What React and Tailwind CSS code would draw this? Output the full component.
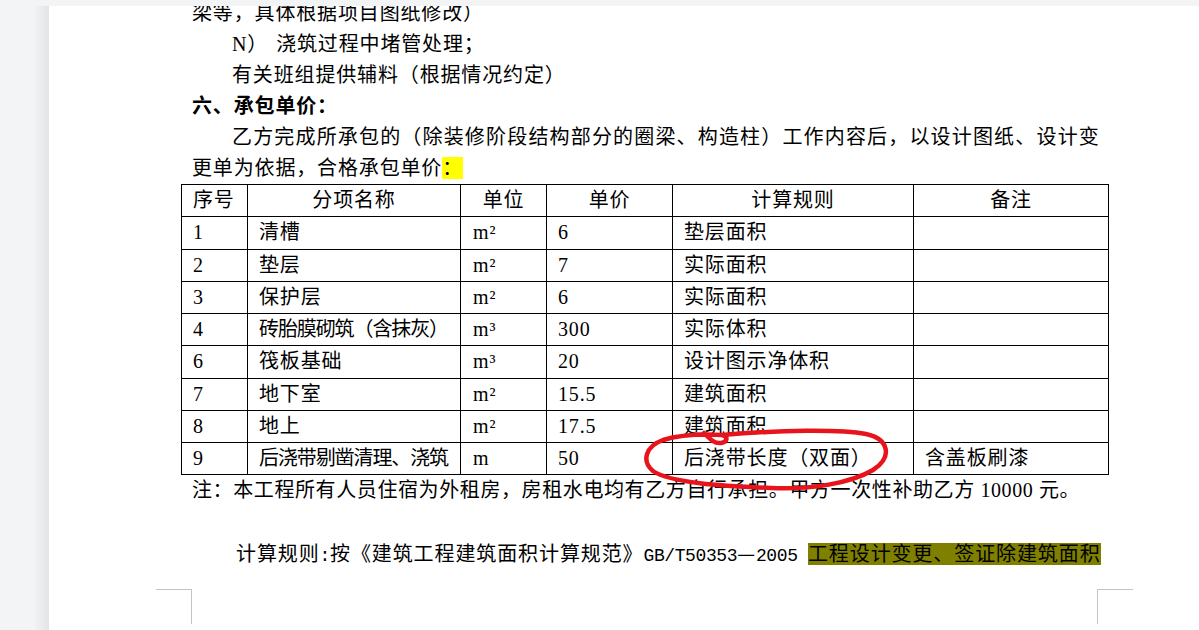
import React from 'react';

const rows = [
  ['1', '清槽', 'm²', '6', '垫层面积', ''],
  ['2', '垫层', 'm²', '7', '实际面积', ''],
  ['3', '保护层', 'm²', '6', '实际面积', ''],
  ['4', '砖胎膜砌筑（含抹灰）', 'm³', '300', '实际体积', ''],
  ['6', '筏板基础', 'm³', '20', '设计图示净体积', ''],
  ['7', '地下室', 'm²', '15.5', '建筑面积', ''],
  ['8', '地上', 'm²', '17.5', '建筑面积', ''],
  ['9', '后浇带剔凿清理、浇筑', 'm', '50', '后浇带长度（双面）', '含盖板刷漆'],
];

// long names are squeezed a little so they stay on one line, as in Word
const tight = (s) => s.length >= 10;

function PriceTable() {
  return (
    <table className="ml-[-11px] w-[927px] table-fixed border-collapse">
      <colgroup>
        <col className="w-[66px]" />
        <col className="w-[213px]" />
        <col className="w-[86px]" />
        <col className="w-[126px]" />
        <col className="w-[241px]" />
        <col className="w-[195px]" />
      </colgroup>
      <thead>
        <tr className="h-[32.25px]">
          <th className="border border-black px-[11px] py-0 text-left font-normal">序号</th>
          <th className="border border-black px-[11px] py-0 text-center font-normal">分项名称</th>
          <th className="border border-black px-[11px] py-0 text-center font-normal">单位</th>
          <th className="border border-black px-[11px] py-0 text-center font-normal">单价</th>
          <th className="border border-black px-[11px] py-0 text-center font-normal">计算规则</th>
          <th className="border border-black px-[11px] py-0 text-center font-normal">备注</th>
        </tr>
      </thead>
      <tbody>
        {rows.map((r) => (
          <tr key={r[0]} className="h-[32.25px]">
            <td className="border border-black px-[11px] py-0">{r[0]}</td>
            <td className={'whitespace-nowrap border border-black px-[11px] py-0 ' + (tight(r[1]) ? 'tracking-[-1.1px]' : '')}>{r[1]}</td>
            <td className="border border-black px-[12px] py-0">{r[2]}</td>
            <td className="border border-black px-[11px] py-0">{r[3]}</td>
            <td className="whitespace-nowrap border border-black px-[11px] py-0">{r[4]}</td>
            <td className="border border-black px-[11px] py-0">{r[5]}</td>
          </tr>
        ))}
      </tbody>
    </table>
  );
}

export default function App() {
  return (
    <div className="relative flex h-[630px] w-[1199px] overflow-hidden bg-white text-black">
      {/* grey desk to the left of the page */}
      <div className="flex w-[49px] shrink-0">
        <div className="w-[33px] bg-[#f3f4f5]" />
        <div className="w-[16px] bg-gradient-to-r from-[#f3f4f5] to-[#e3e4e6]" />
      </div>

      {/* page */}
      <div className="flex-1">
        <div className="mt-[-2px] pl-[143px] font-['Liberation_Serif','Noto_Sans_CJK_SC',serif] text-[20px] leading-[31px] tracking-[0.85px]">
          <div>梁等，具体根据项目图纸修改）</div>
          <div className="pl-[40px]">
            N）<span className="ml-[8px]">浇筑过程中堵管处理；</span>
          </div>
          <div className="pl-[40px]">有关班组提供辅料（根据情况约定）</div>
          <div className="font-bold">六、承包单价：</div>
          <div className="whitespace-nowrap pl-[40px] tracking-[1.17px]">
            乙方完成所承包的（除装修阶段结构部分的圈梁、构造柱）工作内容后，以设计图纸、设计变
          </div>
          <div>
            更单为依据，合格承包单价<span className="bg-[#ffff00]">：</span>
          </div>

          <PriceTable />

          <div className="whitespace-nowrap tracking-[0.6px]">
            注：本工程所有人员住宿为外租房，房租水电均有乙方自行承担。甲方一次性补助乙方 10000 元。
          </div>
          <div className="h-[31px]" />
          <div className="whitespace-nowrap pl-[44px] tracking-[0.9px]">
            计算规则<span className="font-['Liberation_Mono',monospace] text-[18px] tracking-[-0.4px]">:</span>按《建筑工程建筑面积计算规范》
            <span className="font-['Liberation_Mono',monospace] text-[18px] tracking-[-0.4px]">GB/T50353</span>
            <span className="font-['Noto_Sans_CJK_SC',sans-serif]">—</span>
            <span className="font-['Liberation_Mono',monospace] text-[18px] tracking-[-0.4px]">2005 </span>
            <span className="bg-[#808000]">工程设计变更、签证除建筑面积</span>
          </div>
        </div>

        {/* page corner marks */}
        <div className="ml-[107px] mt-[17px] flex w-[977px] justify-between">
          <div className="h-[35px] w-[36px] border-r border-t border-[#c3c3c3]" />
          <div className="h-[35px] w-[36px] border-l border-t border-[#c3c3c3]" />
        </div>
      </div>

      {/* window chrome strip along the top */}
      <div className="absolute left-0 right-0 top-0 h-[6px] bg-[#f3f4f5]" />

      {/* hand-drawn red ring */}
      <svg className="pointer-events-none absolute left-0 top-0" width="1199" height="630" viewBox="0 0 1199 630">
        <path
          d="M704 433 C709 438 714 444 721 443 C727 442 729 437 722 435 C780 430 840 429 866 434 C889 439 893 457 873 470 C851 483 811 490 771 488 C721 486 671 483 653 471 C641 461 646 446 663 440 C683 434 703 434 722 435"
          fill="none"
          stroke="#e8141c"
          strokeWidth="4.5"
          strokeLinecap="round"
          strokeLinejoin="round"
        />
      </svg>
    </div>
  );
}
